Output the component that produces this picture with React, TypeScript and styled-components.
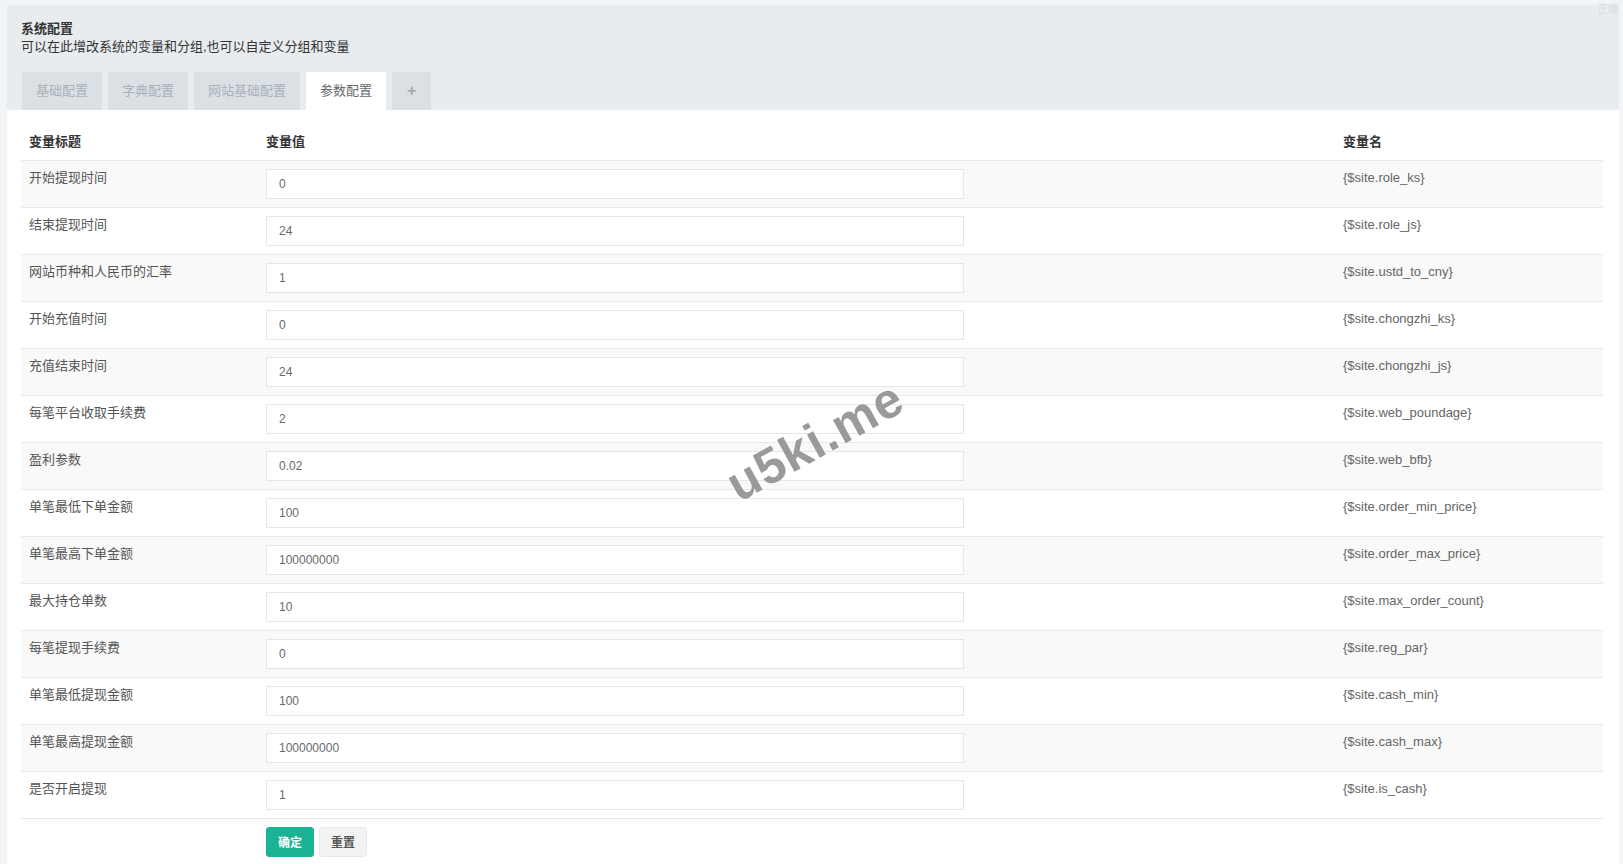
import styled, { createGlobalStyle } from "styled-components";

const GlobalStyle = createGlobalStyle`
  html, body {
    margin: 0;
    padding: 0;
    background: #f3f4f6;
  }
  body {
    font-family: "Liberation Sans", "Noto Sans CJK SC", sans-serif;
    font-size: 13px;
    color: #676a6c;
  }
`;

const Page = styled.div`
  position: relative;
  padding: 5px 4px 0 7px;
  height: 859px;
  overflow: hidden;
`;

const Panel = styled.div`
  display: flex;
  flex-direction: column;
  height: 100%;
`;

const Heading = styled.div`
  background: #e8ecef;
  padding: 15px 14px 0 14px;
`;

const Title = styled.div`
  font-weight: bold;
  color: #333;
  line-height: 18px;
`;

const Subtitle = styled.div`
  color: #333;
  line-height: 18px;
`;

const Tabs = styled.div`
  display: flex;
  gap: 6px;
  margin-top: 16px;
  padding-left: 1px;
`;

const Tab = styled.div<{ $active?: boolean }>`
  height: 38px;
  line-height: 38px;
  padding: 0 14px;
  background: ${(p) => (p.$active ? "#ffffff" : "#dbe0e4")};
  color: ${(p) => (p.$active ? "#676a6c" : "#a9b1b8")};
  font-size: 13px;
`;

const PlusTab = styled(Tab)`
  padding: 0;
  width: 39px;
  text-align: center;
  font-weight: bold;
  font-size: 16px;
  color: #a3abb2;
`;

const Body = styled.div`
  flex: 1;
  background: #ffffff;
  padding: 15px 16px 0 14px;
`;

const Table = styled.table`
  width: 100%;
  border-collapse: collapse;
  table-layout: fixed;
`;

const HeadCell = styled.th<{ $w?: number }>`
  box-sizing: border-box;
  text-align: left;
  font-weight: bold;
  color: #333;
  padding: 8px;
  line-height: 18.5px;
  width: ${(p) => (p.$w ? `${p.$w}px` : "auto")};
`;

const Row = styled.tr<{ $odd: boolean }>`
  background: ${(p) => (p.$odd ? "#f9f9f9" : "#ffffff")};
  border-top: 1px solid #e7eaec;
`;

const Cell = styled.td`
  padding: 8px;
  line-height: 18.5px;
  vertical-align: top;
  color: #555;
`;

const NameCell = styled(Cell)`
  color: #666;
`;

const Input = styled.input`
  box-sizing: border-box;
  display: block;
  width: 698px;
  height: 30px;
  border: 1px solid #e5e6e7;
  background: #fff;
  padding: 0 12px;
  font-family: "Liberation Sans", sans-serif;
  font-size: 12px;
  color: #676a6c;
  outline: none;
`;

const FootRow = styled.tr`
  border-top: 1px solid #e7eaec;
`;

const Buttons = styled.div`
  display: flex;
  gap: 5px;
`;

const Button = styled.button<{ $primary?: boolean }>`
  height: 30px;
  padding: 0 11px;
  border-radius: 3px;
  font-family: "Liberation Sans", "Noto Sans CJK SC", sans-serif;
  font-size: 12px;
  font-weight: bold;
  border: 1px solid ${(p) => (p.$primary ? "#1ab394" : "#e7eaec")};
  background: ${(p) => (p.$primary ? "#1ab394" : "#f3f3f3")};
  color: ${(p) => (p.$primary ? "#ffffff" : "#555")};
`;

const Watermark = styled.div`
  position: absolute;
  left: 815px;
  top: 441px;
  transform: translate(-50%, -50%) rotate(-29deg);
  font-family: "Liberation Sans", sans-serif;
  font-weight: bold;
  font-size: 50px;
  color: #9a9a9a;
  letter-spacing: 1px;
  pointer-events: none;
`;

const CornerMark = styled.div`
  position: absolute;
  right: 4px;
  top: 1px;
  font-family: "Noto Sans CJK SC", sans-serif;
  font-size: 11px;
  line-height: 14px;
  color: #d8dcdf;
`;

const rows: [string, string, string][] = [
  ["开始提现时间", "0", "{$site.role_ks}"],
  ["结束提现时间", "24", "{$site.role_js}"],
  ["网站币种和人民币的汇率", "1", "{$site.ustd_to_cny}"],
  ["开始充值时间", "0", "{$site.chongzhi_ks}"],
  ["充值结束时间", "24", "{$site.chongzhi_js}"],
  ["每笔平台收取手续费", "2", "{$site.web_poundage}"],
  ["盈利参数", "0.02", "{$site.web_bfb}"],
  ["单笔最低下单金额", "100", "{$site.order_min_price}"],
  ["单笔最高下单金额", "100000000", "{$site.order_max_price}"],
  ["最大持仓单数", "10", "{$site.max_order_count}"],
  ["每笔提现手续费", "0", "{$site.reg_par}"],
  ["单笔最低提现金额", "100", "{$site.cash_min}"],
  ["单笔最高提现金额", "100000000", "{$site.cash_max}"],
  ["是否开启提现", "1", "{$site.is_cash}"],
];

const App = () => {
  return (
    <>
      <GlobalStyle />
      <Page>
        <CornerMark>正版</CornerMark>
        <Panel>
          <Heading>
            <Title>系统配置</Title>
            <Subtitle>可以在此增改系统的变量和分组,也可以自定义分组和变量</Subtitle>
            <Tabs>
              <Tab>基础配置</Tab>
              <Tab>字典配置</Tab>
              <Tab>网站基础配置</Tab>
              <Tab $active>参数配置</Tab>
              <PlusTab>+</PlusTab>
            </Tabs>
          </Heading>
          <Body>
            <Table>
              <thead>
                <tr>
                  <HeadCell $w={237}>变量标题</HeadCell>
                  <HeadCell $w={1077}>变量值</HeadCell>
                  <HeadCell>变量名</HeadCell>
                </tr>
              </thead>
              <tbody>
                {rows.map(([label, value, name], i) => (
                  <Row key={name} $odd={i % 2 === 0}>
                    <Cell>{label}</Cell>
                    <Cell>
                      <Input defaultValue={value} />
                    </Cell>
                    <NameCell>{name}</NameCell>
                  </Row>
                ))}
              </tbody>
              <tfoot>
                <FootRow>
                  <Cell></Cell>
                  <Cell>
                    <Buttons>
                      <Button $primary>确定</Button>
                      <Button>重置</Button>
                    </Buttons>
                  </Cell>
                  <Cell></Cell>
                </FootRow>
              </tfoot>
            </Table>
          </Body>
        </Panel>
        <Watermark>u5ki.me</Watermark>
      </Page>
    </>
  );
};

export default App;
